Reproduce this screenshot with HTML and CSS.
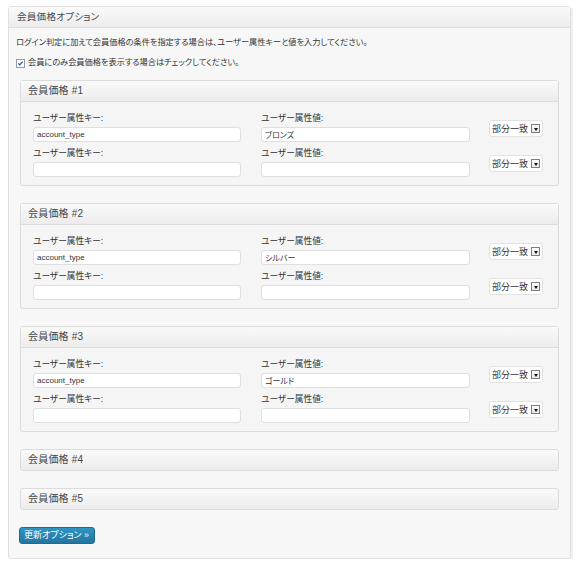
FILE: index.html
```html
<!DOCTYPE html>
<html lang="ja">
<head>
<meta charset="utf-8">
<title>会員価格オプション</title>
<link rel="stylesheet" href="styles.css">
</head>
<body>
<div class="postbox">
  <h3 class="hndle">会員価格オプション</h3>
  <div class="inside">
    <p class="desc">ログイン判定に加えて会員価格の条件を指定する場合は、ユーザー属性キーと値を入力してください。</p>
    <label class="check"><span class="cb"><svg width="9" height="9" viewBox="0 0 9 9"><path d="M1.8 4.4 L3.6 6.4 L7.2 2" fill="none" stroke="#2b4f9e" stroke-width="1.5"/></svg></span>会員にのみ会員価格を表示する場合はチェックしてください。</label>

    <div class="panel">
      <div class="panel-head">会員価格 #1</div>
      <div class="panel-body">
        <div class="field"><div class="lbl">ユーザー属性キー:</div><input class="inp" type="text" value="account_type"></div>
        <div class="field"><div class="lbl">ユーザー属性値:</div><input class="inp" type="text" value="ブロンズ"></div>
        <div class="sel">部分一致<span class="arrow"></span></div>
        <div class="field"><div class="lbl">ユーザー属性キー:</div><input class="inp" type="text" value=""></div>
        <div class="field"><div class="lbl">ユーザー属性値:</div><input class="inp" type="text" value=""></div>
        <div class="sel">部分一致<span class="arrow"></span></div>
      </div>
    </div>

    <div class="panel">
      <div class="panel-head">会員価格 #2</div>
      <div class="panel-body">
        <div class="field"><div class="lbl">ユーザー属性キー:</div><input class="inp" type="text" value="account_type"></div>
        <div class="field"><div class="lbl">ユーザー属性値:</div><input class="inp" type="text" value="シルバー"></div>
        <div class="sel">部分一致<span class="arrow"></span></div>
        <div class="field"><div class="lbl">ユーザー属性キー:</div><input class="inp" type="text" value=""></div>
        <div class="field"><div class="lbl">ユーザー属性値:</div><input class="inp" type="text" value=""></div>
        <div class="sel">部分一致<span class="arrow"></span></div>
      </div>
    </div>

    <div class="panel">
      <div class="panel-head">会員価格 #3</div>
      <div class="panel-body">
        <div class="field"><div class="lbl">ユーザー属性キー:</div><input class="inp" type="text" value="account_type"></div>
        <div class="field"><div class="lbl">ユーザー属性値:</div><input class="inp" type="text" value="ゴールド"></div>
        <div class="sel">部分一致<span class="arrow"></span></div>
        <div class="field"><div class="lbl">ユーザー属性キー:</div><input class="inp" type="text" value=""></div>
        <div class="field"><div class="lbl">ユーザー属性値:</div><input class="inp" type="text" value=""></div>
        <div class="sel">部分一致<span class="arrow"></span></div>
      </div>
    </div>

    <div class="panel closed">
      <div class="panel-head">会員価格 #4</div>
    </div>

    <div class="panel closed">
      <div class="panel-head">会員価格 #5</div>
    </div>

    <button class="btn" type="button">更新オプション »</button>
  </div>
</div>
</body>
</html>
```

FILE: styles.css
```css
* { box-sizing: border-box; }

html, body {
  margin: 0;
  padding: 0;
  background: #ffffff;
}

body {
  font-family: "Liberation Sans", "Noto Sans CJK JP", sans-serif;
  font-feature-settings: "palt";
  color: #333333;
  font-size: 8.7px;
}

.postbox {
  margin: 6px 9px 0 8px;
  border: 1px solid #dfdfdf;
  border-radius: 3px;
  background: #f7f7f7;
  box-shadow: 2px 1px 0 #f0f0f0;
}

.hndle {
  margin: 0;
  height: 21px;
  padding: 0 8px;
  font-size: 9.6px;
  font-weight: normal;
  line-height: 20px;
  color: #464646;
  letter-spacing: 0.2px;
  background: linear-gradient(#fafafa, #ececec);
  border-bottom: 1px solid #dfdfdf;
}

.inside {
  padding: 7px 7px 14px 7px;
}

.desc {
  margin: 0;
  height: 16px;
  line-height: 16px;
  font-size: 8.2px;
  color: #333333;
}

.check {
  display: flex;
  align-items: center;
  margin-top: 4px;
  height: 16px;
  line-height: 16px;
  font-size: 8.2px;
}

.cb {
  display: inline-flex;
  width: 9px;
  height: 9px;
  border: 1px solid #8a9cb6;
  background: #ffffff;
  margin-right: 3px;
  align-items: center;
  justify-content: center;
}

.cb svg { display: block; width: 7px; height: 7px; }

.panel {
  margin: 9px 4px 17px 4px;
  border: 1px solid #dcdcdc;
  border-radius: 3px;
  background: #f5f5f5;
}

.panel + .panel { margin-top: 0; }

.panel-head {
  height: 21px;
  padding-left: 7px;
  font-size: 10px;
  line-height: 20px;
  color: #464646;
  letter-spacing: 0.2px;
  background: linear-gradient(#fafafa, #ececec);
  border-bottom: 1px solid #dcdcdc;
}

.panel.closed .panel-head {
  height: 20px;
  border-bottom: 0;
  border-radius: 3px;
}

.panel-body {
  display: grid;
  grid-template-columns: 208px 209px 53px;
  column-gap: 20px;
  row-gap: 5px;
  padding: 10px 16px 8px 12px;
}

.field {
  display: flex;
  flex-direction: column;
  gap: 2px;
}

.lbl {
  height: 13px;
  line-height: 13px;
  color: #333333;
}

.inp {
  display: block;
  width: 100%;
  height: 15px;
  margin: 0;
  padding: 0 3px;
  border: 1px solid #dfdfdf;
  border-radius: 3px;
  background: #ffffff;
  font-family: "Liberation Sans", "Noto Sans CJK JP", sans-serif;
  font-feature-settings: "palt";
  font-size: 8px;
  color: #333333;
  outline: none;
}

.sel {
  align-self: end;
  margin-bottom: 5px;
  margin-left: -1px;
  display: flex;
  align-items: center;
  justify-content: space-between;
  height: 17px;
  padding: 0 2px 0 2px;
  border: 1px solid #e2e2e2;
  border-radius: 3px;
  background: #ffffff;
  font-size: 9px;
  color: #333333;
}

.arrow {
  position: relative;
  width: 9px;
  height: 9px;
  border: 1px solid #7f7f7f;
  background: linear-gradient(#fdfdfd, #e6e6e6);
}

.arrow::after {
  content: "";
  position: absolute;
  left: 1.5px;
  top: 2.5px;
  border-left: 2.5px solid transparent;
  border-right: 2.5px solid transparent;
  border-top: 3px solid #111111;
}

.btn {
  display: block;
  margin: 5px 0 0 3px;
  width: 76px;
  height: 17px;
  padding: 0 4px;
  border: 1px solid #1f6c90;
  border-radius: 3px;
  background: linear-gradient(#2e93c4, #22769f);
  color: #ffffff;
  font-family: "Liberation Sans", "Noto Sans CJK JP", sans-serif;
  font-feature-settings: "palt";
  font-size: 9px;
  line-height: 15px;
  text-align: left;
  cursor: pointer;
}
```
